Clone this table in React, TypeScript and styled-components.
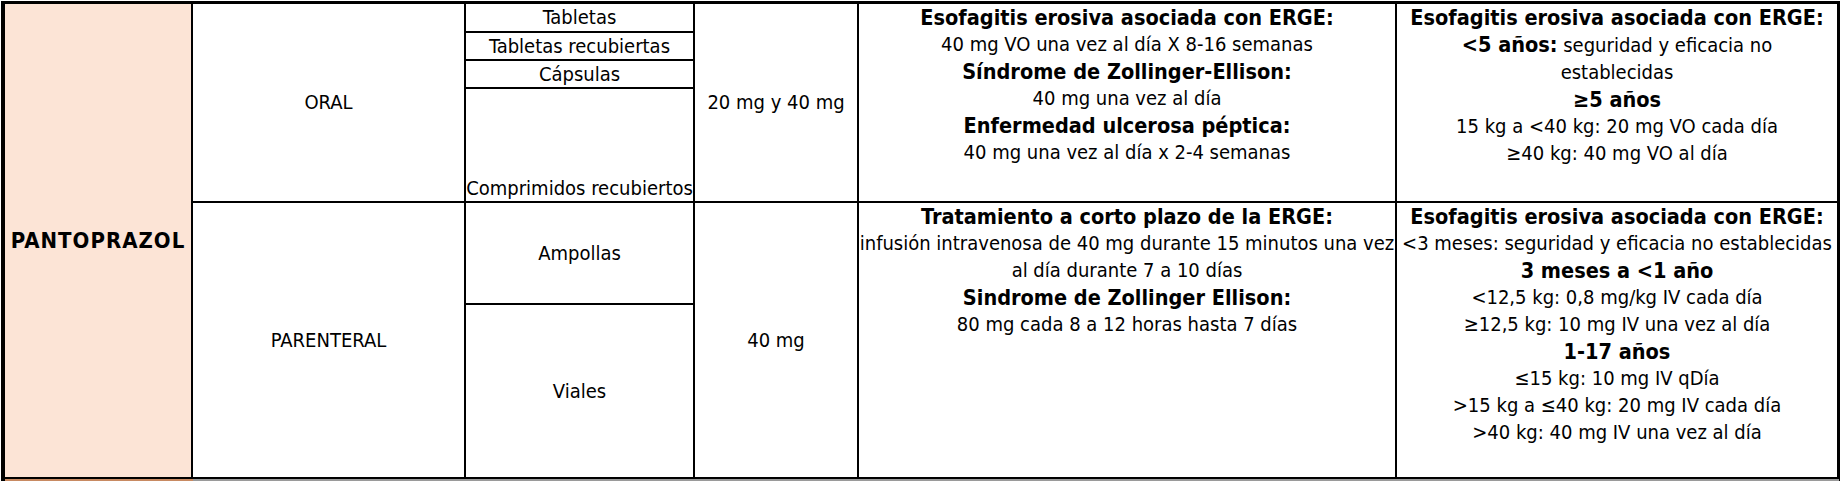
import styled, { createGlobalStyle } from "styled-components"

const GlobalStyle = createGlobalStyle`
  html, body {
    margin: 0;
    padding: 0;
    background: #fff;
  }
  body {
    font-family: "DejaVu Sans Condensed", "DejaVu Sans", sans-serif;
    font-stretch: condensed;
    color: #000;
  }
`

type Area = { $area: string }

const Sheet = styled.div`
  display: grid;
  grid-template-columns: 188px 273px 229px 164px 538px 442px;
  grid-template-rows: 29px 28px 28px 114px 102px 174px 2px;
  width: max-content;
  margin: 1px 0 0 1px;
  border-top: 3px solid #000;
  border-left: 4px solid #000;
  border-right: 1px solid #000;
`

const Cell = styled.div<Area>`
  grid-area: ${(p) => p.$area};
  box-sizing: border-box;
  border-right: 2px solid #000;
  border-bottom: 2px solid #000;
  font-size: 20px;
  line-height: 27px;
  text-align: center;
  white-space: nowrap;
  overflow: hidden;
  display: flex;
  flex-direction: column;
  justify-content: center;
`

const DrugCell = styled(Cell)`
  background: #fce4d6;
  font-weight: bold;
  font-size: 22px;
  letter-spacing: 1px;
`

const RouteCell = styled(Cell)``

const FormCell = styled(Cell)<{ $bottom?: boolean }>`
  justify-content: ${(p) => (p.$bottom ? "flex-end" : "center")};
  line-height: ${(p) => (p.$bottom ? "25px" : "27px")};
`

const DoseCell = styled(Cell)``

const IndicationCell = styled(Cell)`
  justify-content: flex-start;
`

const Heading = styled.div`
  font-weight: bold;
  font-size: 21.5px;
`

const Line = styled.div``

const Strong = styled.b`
  font-size: 21.5px;
`

const NextRowEdge = styled.div<Area & { $tone: "peach" | "grey" }>`
  grid-area: ${(p) => p.$area};
  background: ${(p) => (p.$tone === "peach" ? "#c88a62" : "#9a9a9a")};
`

const area = (row: number, rowEnd: number, col: number) =>
  `${row} / ${col} / ${rowEnd} / ${col + 1}`

export default function App() {
  return (
    <>
      <GlobalStyle />
      <Sheet>
        <DrugCell $area={area(1, 7, 1)}>PANTOPRAZOL</DrugCell>

        <RouteCell $area={area(1, 5, 2)}>ORAL</RouteCell>
        <RouteCell $area={area(5, 7, 2)}>PARENTERAL</RouteCell>

        <FormCell $area={area(1, 2, 3)}>Tabletas</FormCell>
        <FormCell $area={area(2, 3, 3)}>Tabletas recubiertas</FormCell>
        <FormCell $area={area(3, 4, 3)}>Cápsulas</FormCell>
        <FormCell $area={area(4, 5, 3)} $bottom>
          Comprimidos recubiertos
        </FormCell>
        <FormCell $area={area(5, 6, 3)}>Ampollas</FormCell>
        <FormCell $area={area(6, 7, 3)}>Viales</FormCell>

        <DoseCell $area={area(1, 5, 4)}>20 mg y 40 mg</DoseCell>
        <DoseCell $area={area(5, 7, 4)}>40 mg</DoseCell>

        <IndicationCell $area={area(1, 5, 5)}>
          <Heading>Esofagitis erosiva asociada con ERGE:</Heading>
          <Line>40 mg VO una vez al día X 8-16 semanas</Line>
          <Heading>Síndrome de Zollinger-Ellison:</Heading>
          <Line>40 mg una vez al día</Line>
          <Heading>Enfermedad ulcerosa péptica:</Heading>
          <Line>40 mg una vez al día x 2-4 semanas</Line>
        </IndicationCell>
        <IndicationCell $area={area(5, 7, 5)}>
          <Heading>Tratamiento a corto plazo de la ERGE:</Heading>
          <Line>infusión intravenosa de 40 mg durante 15 minutos una vez</Line>
          <Line>al día durante 7 a 10 días</Line>
          <Heading>Sindrome de Zollinger Ellison:</Heading>
          <Line>80 mg cada 8 a 12 horas hasta 7 días</Line>
        </IndicationCell>

        <IndicationCell $area={area(1, 5, 6)}>
          <Heading>Esofagitis erosiva asociada con ERGE:</Heading>
          <Line>
            <Strong>&lt;5 años:</Strong> seguridad y eficacia no
          </Line>
          <Line>establecidas</Line>
          <Heading>≥5 años</Heading>
          <Line>15 kg a &lt;40 kg: 20 mg VO cada día</Line>
          <Line>≥40 kg: 40 mg VO al día</Line>
        </IndicationCell>
        <IndicationCell $area={area(5, 7, 6)}>
          <Heading>Esofagitis erosiva asociada con ERGE:</Heading>
          <Line>&lt;3 meses: seguridad y eficacia no establecidas</Line>
          <Heading>3 meses a &lt;1 año</Heading>
          <Line>&lt;12,5 kg: 0,8 mg/kg IV cada día</Line>
          <Line>≥12,5 kg: 10 mg IV una vez al día</Line>
          <Heading>1-17 años</Heading>
          <Line>≤15 kg: 10 mg IV qDía</Line>
          <Line>&gt;15 kg a ≤40 kg: 20 mg IV cada día</Line>
          <Line>&gt;40 kg: 40 mg IV una vez al día</Line>
        </IndicationCell>

        <NextRowEdge $area={area(7, 8, 1)} $tone="peach" />
        <NextRowEdge $area="7 / 2 / 8 / 7" $tone="grey" />
      </Sheet>
    </>
  )
}
